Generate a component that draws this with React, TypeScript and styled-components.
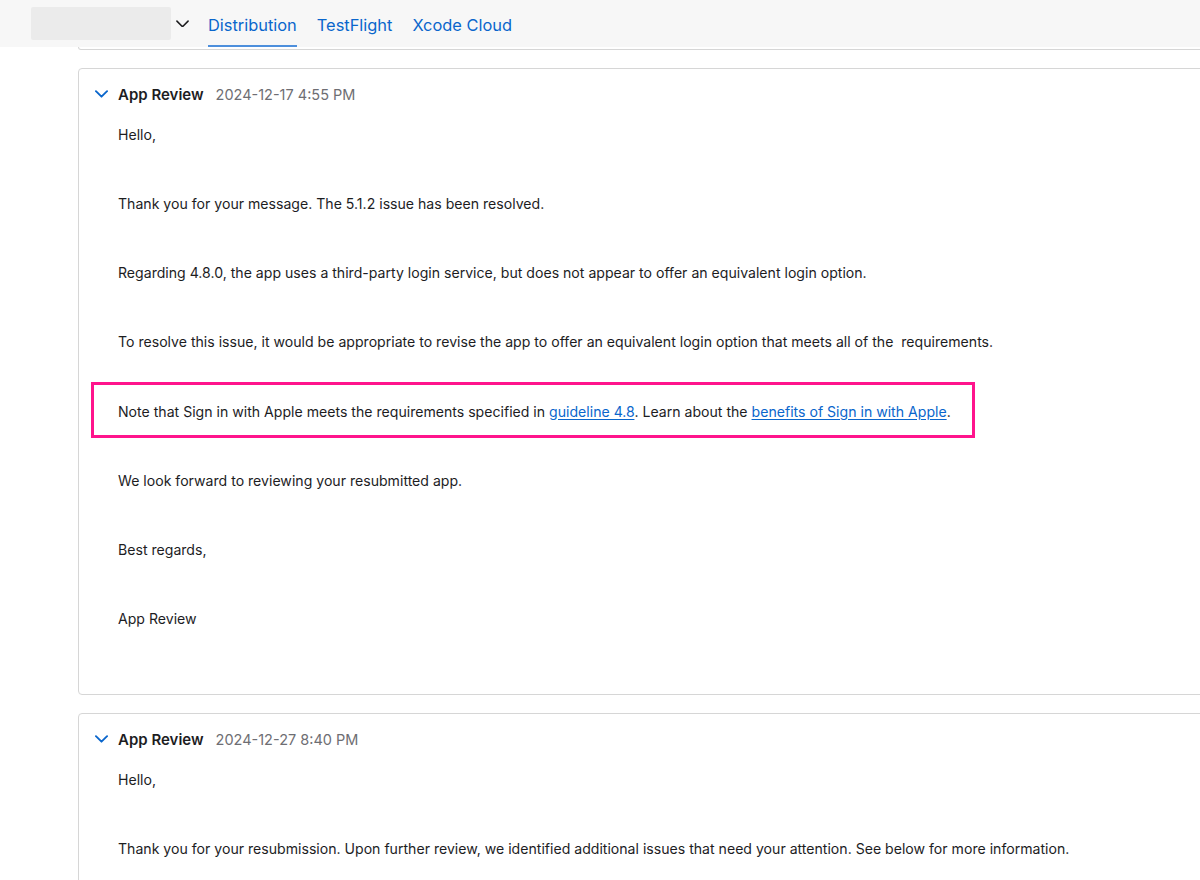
import React from 'react';
import styled, { createGlobalStyle } from 'styled-components';

const GlobalStyle = createGlobalStyle`
  html, body {
    margin: 0;
    padding: 0;
    background: #ffffff;
    overflow-x: hidden;
  }
  body {
    font-family: Inter, "Liberation Sans", Arial, sans-serif;
    color: #1d1d1f;
    -webkit-font-smoothing: antialiased;
  }
`;

const TopBar = styled.header`
  height: 47px;
  display: flex;
  align-items: center;
  padding-left: 31px;
  background: #f7f7f7;
  box-sizing: border-box;
`;

const Placeholder = styled.div`
  width: 140px;
  height: 33px;
  border-radius: 2px;
  background: #ebebeb;
`;

const MenuToggle = styled.button`
  display: flex;
  align-items: center;
  justify-content: center;
  width: 22px;
  height: 22px;
  margin-right: 15px;
  padding: 0;
  border: none;
  background: none;
  color: #1d1d1f;
`;

const Tabs = styled.nav`
  display: flex;
  align-self: stretch;
  gap: 20px;
`;

const Tab = styled.a<{ $active?: boolean }>`
  display: flex;
  align-items: center;
  box-sizing: border-box;
  padding-top: 4px;
  font-size: 16.4px;
  color: #0a66cc;
  text-decoration: none;
  border-bottom: 2px solid ${p => (p.$active ? '#4d8fdc' : 'transparent')};
`;

const Feed = styled.main`
  margin-left: 78px;
  margin-right: -20px;
  display: flex;
  flex-direction: column;
  gap: 18px;
  padding-bottom: 40px;
`;

const PrevCardEdge = styled.div`
  height: 2px;
  border: 1px solid #d6d6d6;
  border-top: none;
  border-radius: 0 0 4px 4px;
`;

const Card = styled.section`
  border: 1px solid #d6d6d6;
  border-radius: 4px;
  padding: 15px 0 17px 16px;
`;

const CardHeader = styled.div`
  display: flex;
  align-items: center;
  height: 20px;
`;

const Chevron = styled.span`
  display: flex;
  width: 14px;
  margin-right: 9px;
  color: #0a66cc;
`;

const Sender = styled.span`
  font-size: 15px;
  font-weight: 600;
  color: #1d1d1f;
`;

const Stamp = styled.span`
  margin-left: 12px;
  font-size: 14.5px;
  color: #6e6e73;
`;

const Body = styled.div`
  padding: 20px 0 0 23px;
`;

const Para = styled.p`
  margin: 0 0 47.15px;
  font-size: 14.1px;
  line-height: 22px;
`;

const Highlight = styled(Para)`
  display: table;
  margin: -19px 0 32.15px -27px;
  padding: 16px 21px 12px 24px;
  border: 3px solid #ff148c;
`;

const Link = styled.a`
  color: #0a66cc;
  text-decoration: underline;
  text-underline-offset: 2px;
`;

const ChevronDown = ({ size = 14, stroke = 2 }: { size?: number; stroke?: number }) => (
  <svg width={size} height={size * 0.6} viewBox="0 0 14 8" fill="none">
    <path d="M1 1l6 6 6-6" stroke="currentColor" strokeWidth={stroke} strokeLinecap="round" strokeLinejoin="round" />
  </svg>
);

interface Message {
  stamp: string;
  paragraphs: React.ReactNode[];
  highlight?: number;
}

const messages: Message[] = [
  {
    stamp: '2024-12-17 4:55 PM',
    highlight: 4,
    paragraphs: [
      'Hello,',
      'Thank you for your message. The 5.1.2 issue has been resolved.',
      'Regarding 4.8.0, the app uses a third-party login service, but does not appear to offer an equivalent login option.',
      'To resolve this issue, it would be appropriate to revise the app to offer an equivalent login option that meets all of the \u00a0requirements.',
      <>
        Note that Sign in with Apple meets the requirements specified in <Link href="#">guideline 4.8</Link>. Learn
        about the <Link href="#">benefits of Sign in with Apple</Link>.
      </>,
      'We look forward to reviewing your resubmitted app.',
      'Best regards,',
      'App Review',
    ],
  },
  {
    stamp: '2024-12-27 8:40 PM',
    paragraphs: [
      'Hello,',
      'Thank you for your resubmission. Upon further review, we identified additional issues that need your attention. See below for more information.',
    ],
  },
];

export default function App() {
  return (
    <>
      <GlobalStyle />
      <TopBar>
        <Placeholder />
        <MenuToggle aria-label="Switch app">
          <ChevronDown size={13} stroke={1.7} />
        </MenuToggle>
        <Tabs>
          <Tab href="#" $active>Distribution</Tab>
          <Tab href="#">TestFlight</Tab>
          <Tab href="#">Xcode Cloud</Tab>
        </Tabs>
      </TopBar>
      <Feed>
        <PrevCardEdge />
        {messages.map(m => (
          <Card key={m.stamp}>
            <CardHeader>
              <Chevron>
                <ChevronDown size={13} stroke={2} />
              </Chevron>
              <Sender>App Review</Sender>
              <Stamp>{m.stamp}</Stamp>
            </CardHeader>
            <Body>
              {m.paragraphs.map((p, i) =>
                i === m.highlight ? <Highlight key={i}>{p}</Highlight> : <Para key={i}>{p}</Para>
              )}
            </Body>
          </Card>
        ))}
      </Feed>
    </>
  );
}
